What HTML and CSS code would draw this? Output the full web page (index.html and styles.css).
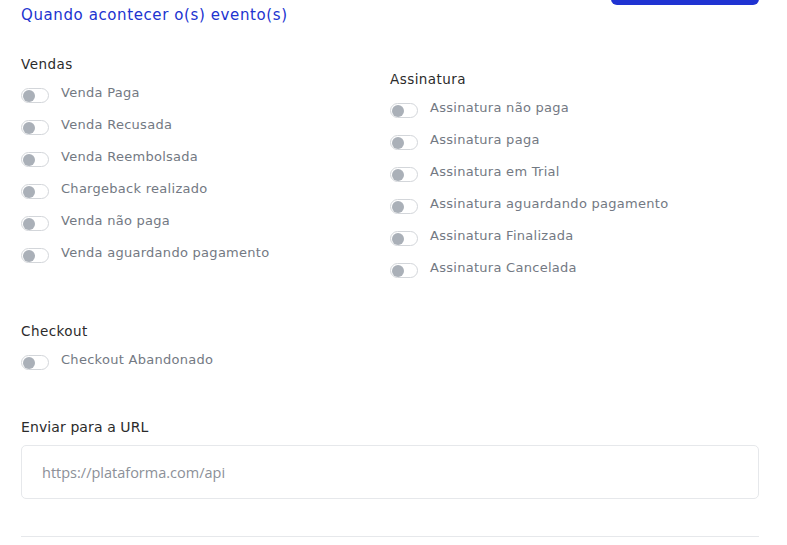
FILE: index.html
```html
<!DOCTYPE html>
<html lang="pt-BR">
<head>
<meta charset="utf-8">
<link rel="stylesheet" href="styles.css">
</head>
<body>
<div class="page">
  <div class="header">
    <h2 class="title">Quando acontecer o(s) evento(s)</h2>
    <button class="save-btn" type="button" aria-label="Salvar"></button>
  </div>
  <div class="columns">
    <section class="group">
      <h3 class="group-title">Vendas</h3>
      <ul class="list">
        <li class="item"><span class="toggle"><span class="knob"></span></span><span class="label">Venda Paga</span></li>
        <li class="item"><span class="toggle"><span class="knob"></span></span><span class="label">Venda Recusada</span></li>
        <li class="item"><span class="toggle"><span class="knob"></span></span><span class="label">Venda Reembolsada</span></li>
        <li class="item"><span class="toggle"><span class="knob"></span></span><span class="label">Chargeback realizado</span></li>
        <li class="item"><span class="toggle"><span class="knob"></span></span><span class="label">Venda não paga</span></li>
        <li class="item"><span class="toggle"><span class="knob"></span></span><span class="label">Venda aguardando pagamento</span></li>
      </ul>
    </section>
    <section class="group group-right">
      <h3 class="group-title">Assinatura</h3>
      <ul class="list">
        <li class="item"><span class="toggle"><span class="knob"></span></span><span class="label">Assinatura não paga</span></li>
        <li class="item"><span class="toggle"><span class="knob"></span></span><span class="label">Assinatura paga</span></li>
        <li class="item"><span class="toggle"><span class="knob"></span></span><span class="label">Assinatura em Trial</span></li>
        <li class="item"><span class="toggle"><span class="knob"></span></span><span class="label">Assinatura aguardando pagamento</span></li>
        <li class="item"><span class="toggle"><span class="knob"></span></span><span class="label">Assinatura Finalizada</span></li>
        <li class="item"><span class="toggle"><span class="knob"></span></span><span class="label">Assinatura Cancelada</span></li>
      </ul>
    </section>
  </div>
  <section class="group group-checkout">
    <h3 class="group-title">Checkout</h3>
    <ul class="list">
      <li class="item"><span class="toggle"><span class="knob"></span></span><span class="label">Checkout Abandonado</span></li>
    </ul>
  </section>
  <div class="url-field">
    <label class="field-label" for="url">Enviar para a URL</label>
    <input class="input" id="url" type="text" placeholder="https://plataforma.com/api">
  </div>
  <hr class="divider">
</div>
</body>
</html>
```

FILE: styles.css
```css
* { box-sizing: border-box; }
html, body { margin: 0; padding: 0; background: #fff; }
body {
  font-family: "DejaVu Sans", "Noto Sans", sans-serif;
  color: #2b2b2b;
  overflow: hidden;
}
.page {
  width: 738px;
  margin-left: 21px;
}
.header {
  display: flex;
  justify-content: space-between;
  align-items: flex-start;
  height: 25px;
}
.title {
  margin: 5px 0 0;
  font-size: 15px;
  line-height: 20px;
  font-weight: 500;
  color: #2133d0;
  letter-spacing: 0.6px;
}
.save-btn {
  width: 148px;
  height: 40px;
  margin-top: -35px;
  border: 0;
  border-radius: 6px;
  background: #2033d2;
}
.columns {
  display: grid;
  grid-template-columns: 369px 1fr;
  margin-top: 29px;
}
.group-right { padding-top: 15px; }
.group-title {
  margin: 0;
  font-size: 13.5px;
  line-height: 20px;
  font-weight: 500;
  color: #2b2b2b;
  letter-spacing: 0.45px;
}
.list {
  list-style: none;
  margin: 6px 0 0;
  padding: 0;
}
.item {
  display: flex;
  align-items: flex-start;
  gap: 12px;
  height: 32px;
}
.toggle {
  display: flex;
  align-items: center;
  width: 28px;
  height: 15px;
  margin-top: 8px;
  padding: 0 1px;
  border: 1px solid #d3d6da;
  border-radius: 8px;
  background: #fff;
}
.knob {
  width: 12px;
  height: 12px;
  border-radius: 50%;
  background: #aab0b8;
}
.label {
  font-size: 13px;
  line-height: 20px;
  margin-top: 3px;
  color: #737983;
  letter-spacing: 0.28px;
}
.group-checkout { margin-top: 34px; }
.url-field {
  display: flex;
  flex-direction: column;
  margin-top: 38px;
}
.field-label {
  font-size: 14px;
  line-height: 20px;
  font-weight: 500;
  color: #2b2b2b;
  letter-spacing: 0.1px;
}
.input {
  margin-top: 8px;
  height: 54px;
  border: 1px solid #e6e8eb;
  border-radius: 5px;
  padding: 0 20px;
  font-family: "Open Sans", sans-serif;
  font-size: 14.5px;
  color: #333;
  outline: none;
}
.input::placeholder { color: #8c9098; }
.divider {
  margin: 37px 0 0;
  border: 0;
  border-top: 1px solid #e6e8eb;
}
```
